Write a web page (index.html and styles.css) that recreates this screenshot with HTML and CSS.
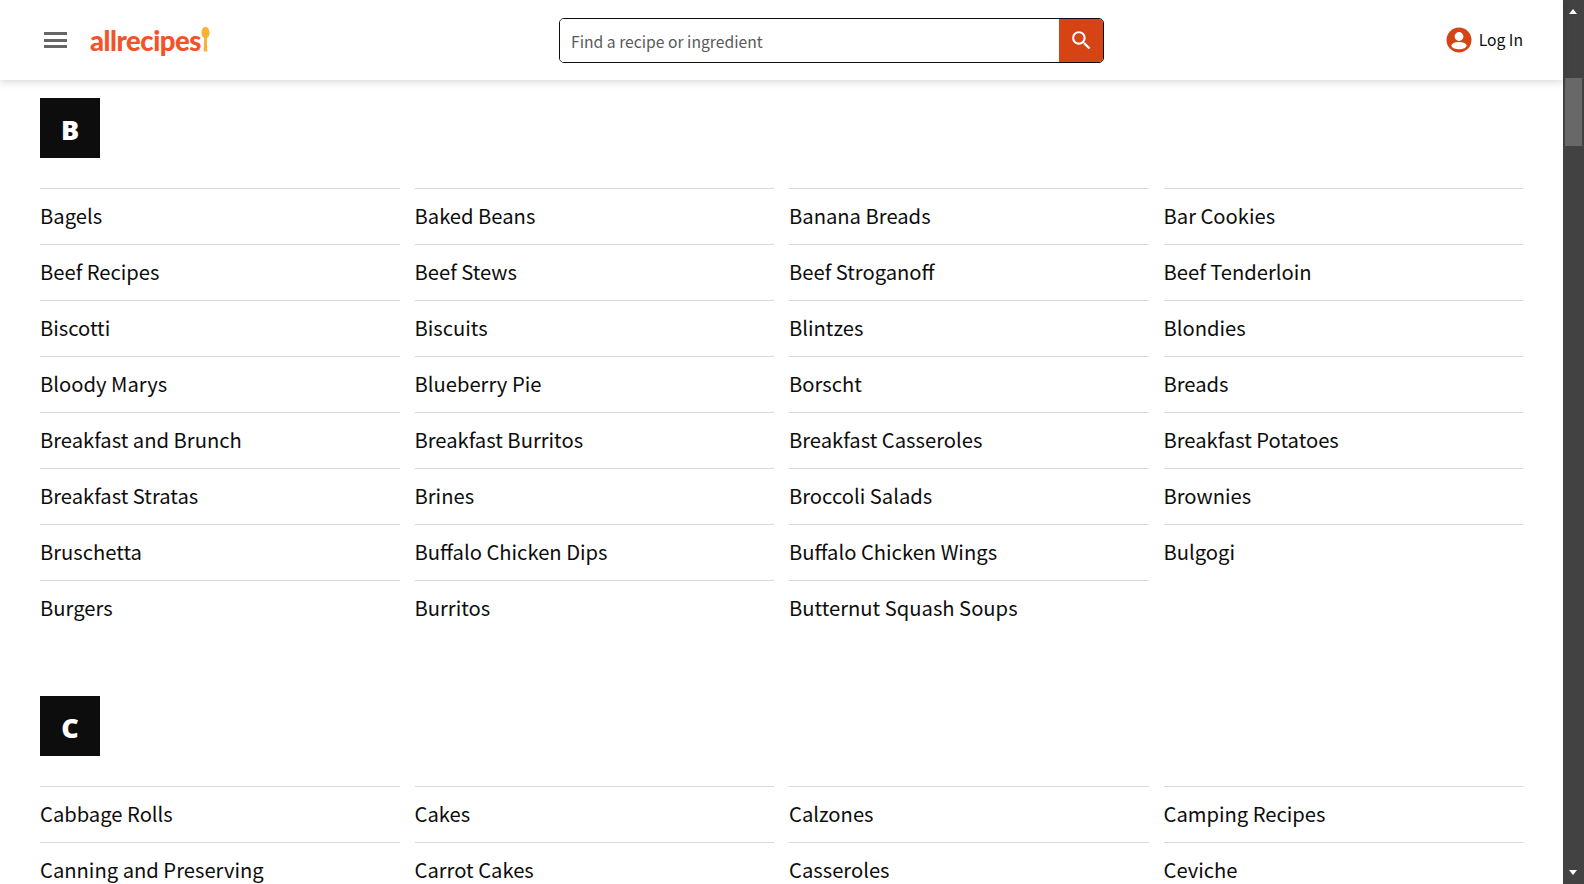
FILE: index.html
```html
<!DOCTYPE html>
<html lang="en">
<head>
    <meta charset="UTF-8">
    <meta name="viewport" content="width=device-width, initial-scale=1.0">
    <title>Allrecipes - Recipes A-Z</title>
    <link rel="stylesheet" href="styles.css">
</head>
<body>
    <div class="page">
        <header class="site-header">
            <div class="header-left">
                <button class="menu-btn" type="button" aria-label="Menu">
                    <span></span><span></span><span></span>
                </button>
                <a class="logo" href="#">
                    <span class="logo-text">allrecipes</span>
                    <svg class="logo-spoon" viewBox="0 0 10 28" width="9" height="28" aria-hidden="true">
                        <ellipse cx="5" cy="7" rx="4.5" ry="6.5" fill="#f9b233"/>
                        <path d="M3.6 11h2.8l.6 17H3z" fill="#f9b233"/>
                    </svg>
                </a>
            </div>
            <form class="search" onsubmit="event.preventDefault();">
                <input class="search-input" type="text" placeholder="Find a recipe or ingredient">
                <button class="search-btn" type="submit" aria-label="Search">
                    <svg viewBox="0 0 24 24" width="25" height="25" aria-hidden="true">
                        <path fill="#fff" d="M15.5 14h-.79l-.28-.27A6.47 6.47 0 0 0 16 9.5 6.5 6.5 0 1 0 9.5 16c1.61 0 3.09-.59 4.23-1.57l.27.28v.79l5 4.99L20.49 19l-4.99-5zm-6 0C7.01 14 5 11.99 5 9.5S7.01 5 9.5 5 14 7.01 14 9.5 11.99 14 9.5 14z"/>
                    </svg>
                </button>
            </form>
            <a class="login" href="#">
                <svg viewBox="0 0 26 26" width="26" height="26" aria-hidden="true">
                    <circle cx="13" cy="13" r="12.5" fill="#d64416"/>
                    <circle cx="13" cy="9.5" r="4.4" fill="#fff"/>
                    <ellipse cx="13" cy="18.6" rx="7.6" ry="3.6" fill="#fff"/>
                </svg>
                <span class="login-text">Log In</span>
            </a>
        </header>

        <main class="content">
            <section class="letter-section">
                <div class="letter-tile">B</div>
                <ul class="link-grid">
                    <li>Bagels</li>
                    <li>Baked Beans</li>
                    <li>Banana Breads</li>
                    <li>Bar Cookies</li>
                    <li>Beef Recipes</li>
                    <li>Beef Stews</li>
                    <li>Beef Stroganoff</li>
                    <li>Beef Tenderloin</li>
                    <li>Biscotti</li>
                    <li>Biscuits</li>
                    <li>Blintzes</li>
                    <li>Blondies</li>
                    <li>Bloody Marys</li>
                    <li>Blueberry Pie</li>
                    <li>Borscht</li>
                    <li>Breads</li>
                    <li>Breakfast and Brunch</li>
                    <li>Breakfast Burritos</li>
                    <li>Breakfast Casseroles</li>
                    <li>Breakfast Potatoes</li>
                    <li>Breakfast Stratas</li>
                    <li>Brines</li>
                    <li>Broccoli Salads</li>
                    <li>Brownies</li>
                    <li>Bruschetta</li>
                    <li>Buffalo Chicken Dips</li>
                    <li>Buffalo Chicken Wings</li>
                    <li>Bulgogi</li>
                    <li>Burgers</li>
                    <li>Burritos</li>
                    <li>Butternut Squash Soups</li>
                </ul>
            </section>
            <section class="letter-section">
                <div class="letter-tile">C</div>
                <ul class="link-grid">
                    <li>Cabbage Rolls</li>
                    <li>Cakes</li>
                    <li>Calzones</li>
                    <li>Camping Recipes</li>
                    <li>Canning and Preserving</li>
                    <li>Carrot Cakes</li>
                    <li>Casseroles</li>
                    <li>Ceviche</li>
                </ul>
            </section>
        </main>
    </div>

    <div class="scrollbar" aria-hidden="true">
        <span class="arrow-up"></span>
        <span class="thumb"></span>
        <span class="arrow-down"></span>
    </div>
</body>
</html>
```

FILE: styles.css
```css
/* page */
html,
body {
    height: 100%;
    margin: 0;
}

body {
    display: flex;
    overflow: hidden;
    background-color: #fff;
    color: #0d0d0d;
    font-family: "Noto Sans CJK JP", "Noto Sans", sans-serif;
}

.page {
    flex: 1;
    min-width: 0;
}

/* header */
.site-header {
    position: relative;
    z-index: 1;
    display: flex;
    align-items: center;
    height: 80px;
    padding: 0 40px 0 44px;
    background-color: #fff;
    box-shadow: 0 2px 8px rgba(0, 0, 0, 0.16);
}

.header-left {
    display: flex;
    flex: none;
    align-items: center;
    width: 515px;
}

.menu-btn {
    display: flex;
    flex-direction: column;
    justify-content: space-between;
    width: 23px;
    height: 16px;
    padding: 0;
    margin-right: 23px;
    border: none;
    background: none;
}

.menu-btn span {
    height: 3px;
    background-color: #666;
}

.logo {
    display: flex;
    align-items: flex-start;
    height: 30px;
    color: #f4532a;
    text-decoration: none;
}

.logo-text {
    font-family: "Lato", sans-serif;
    font-size: 27.5px;
    font-weight: 900;
    line-height: 31px;
    letter-spacing: -0.5px;
}

/* search */
.search {
    display: flex;
    flex: none;
    box-sizing: border-box;
    width: 545px;
    height: 45px;
    border: 1px solid #0d0d0d;
    border-radius: 5px;
    overflow: hidden;
}

.search-input {
    flex: 1;
    min-width: 0;
    padding: 2px 11px 0;
    border: none;
    outline: none;
    font-family: inherit;
    font-size: 15.7px;
    color: #0d0d0d;
}

.search-input::placeholder {
    color: #595959;
    opacity: 1;
}

.search-btn {
    display: flex;
    align-items: center;
    justify-content: center;
    width: 44px;
    padding: 0;
    border: none;
    background-color: #d64416;
}

/* log in */
.login {
    display: flex;
    align-items: center;
    gap: 7px;
    margin-left: auto;
    color: #0d0d0d;
    font-size: 15.7px;
    text-decoration: none;
}

.login-text {
    line-height: 24px;
}

/* letter sections */
.content {
    padding: 18px 40px 0;
}

.letter-section {
    margin-bottom: 60px;
}

.letter-tile {
    display: flex;
    align-items: center;
    justify-content: center;
    box-sizing: border-box;
    width: 60px;
    height: 60px;
    margin-bottom: 30px;
    padding-top: 2px;
    background-color: #0d0d0d;
    color: #fff;
    font-family: "Noto Sans", sans-serif;
    font-size: 27px;
    font-weight: 900;
}

.link-grid {
    display: grid;
    grid-template-columns: repeat(4, 1fr);
    column-gap: 15px;
    margin: 0;
    padding: 0;
    list-style: none;
}

.link-grid li {
    box-sizing: border-box;
    height: 56px;
    border-top: 1px solid #d9d9d9;
    font-size: 20.2px;
    line-height: 54px;
}

/* fake scrollbar, page is a fixed shot */
.scrollbar {
    position: relative;
    flex: none;
    width: 21px;
    background-color: #424242;
}

.thumb {
    position: absolute;
    top: 78px;
    left: 2px;
    width: 17px;
    height: 68px;
    background-color: #686868;
}

.arrow-up,
.arrow-down {
    position: absolute;
    left: 6px;
    width: 0;
    height: 0;
    border-left: 4.5px solid transparent;
    border-right: 4.5px solid transparent;
}

.arrow-up {
    top: 9px;
    border-bottom: 5px solid #fff;
}

.arrow-down {
    bottom: 9px;
    border-top: 5px solid #fff;
}
```
